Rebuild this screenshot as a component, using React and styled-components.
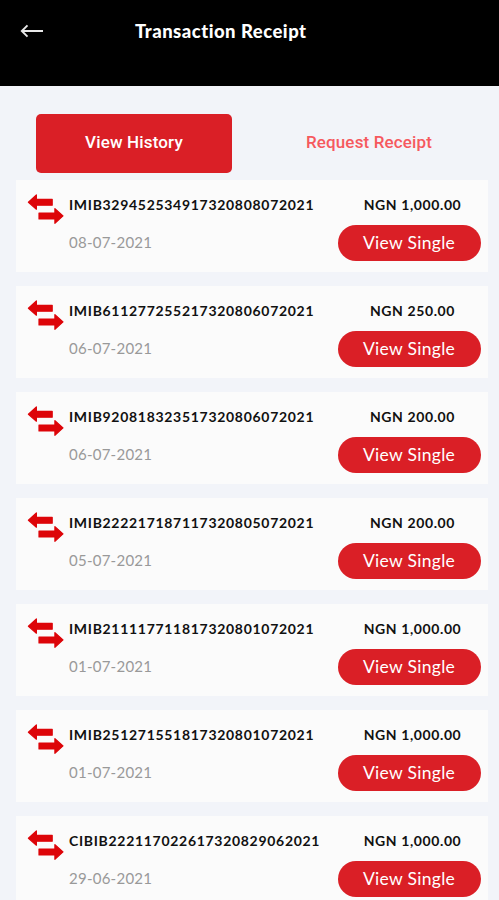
import React, { useState } from "react";
import styled, { createGlobalStyle } from "styled-components";

const transactions = [
  { id: "IMIB329452534917320808072021", date: "08-07-2021", amount: "NGN 1,000.00" },
  { id: "IMIB611277255217320806072021", date: "06-07-2021", amount: "NGN 250.00" },
  { id: "IMIB920818323517320806072021", date: "06-07-2021", amount: "NGN 200.00" },
  { id: "IMIB222217187117320805072021", date: "05-07-2021", amount: "NGN 200.00" },
  { id: "IMIB211117711817320801072021", date: "01-07-2021", amount: "NGN 1,000.00" },
  { id: "IMIB251271551817320801072021", date: "01-07-2021", amount: "NGN 1,000.00" },
  { id: "CIBIB222117022617320829062021", date: "29-06-2021", amount: "NGN 1,000.00" },
];

const BackArrow = () => (
  <svg width="24" height="16" viewBox="0 0 24 16" fill="none" stroke="#e8e8e8" strokeWidth="1.9">
    <path d="M23 8H2M7.5 2.3L1.8 8L7.5 13.7" />
  </svg>
);

const TransferArrows = () => (
  <svg width="37" height="32" viewBox="0 0 37 32" fill="#dd0509" stroke="#dd0509" strokeWidth="1.2" strokeLinejoin="round">
    <path d="M1.4 9.2L9.4 2V6.3H25.2V12.2H9.4V16.2Z" />
    <path d="M36 22.9L27.9 15.6V20H12V25.9H27.9V30.3Z" />
  </svg>
);

const App = () => {
  const [tab, setTab] = useState("history");

  return (
    <StyledScreen>
      <GlobalStyle />
      <StyledHeader>
        <StyledBack aria-label="Back">
          <BackArrow />
        </StyledBack>
        <StyledTitle>Transaction Receipt</StyledTitle>
      </StyledHeader>
      <StyledTabs>
        <StyledTab $active={tab === "history"} onClick={() => setTab("history")}>
          View History
        </StyledTab>
        <StyledTab $active={tab === "request"} onClick={() => setTab("request")}>
          Request Receipt
        </StyledTab>
      </StyledTabs>
      <StyledList>
        {transactions.map((item) => (
          <StyledCard key={item.id}>
            <StyledIcon>
              <TransferArrows />
            </StyledIcon>
            <StyledDetails>
              <StyledId>{item.id}</StyledId>
              <StyledDate>{item.date}</StyledDate>
            </StyledDetails>
            <StyledAction>
              <StyledAmount>{item.amount}</StyledAmount>
              <StyledButton>View Single</StyledButton>
            </StyledAction>
          </StyledCard>
        ))}
      </StyledList>
    </StyledScreen>
  );
};

export default App;

const GlobalStyle = createGlobalStyle`
  body {
    background-color: #f2f4f9;
    margin: 0;
    overflow: hidden;
  }

  button {
    border: none;
    cursor: pointer;
    padding: 0;
  }
`;

const StyledScreen = styled.div`
  background-color: #f2f4f9;
  box-sizing: border-box;
  font-family: Lato, "Open Sans", sans-serif;
  height: 900px;
  overflow: hidden;
  width: 499px;
`;

const StyledHeader = styled.header`
  align-items: flex-start;
  background-color: #000;
  box-sizing: border-box;
  display: flex;
  height: 86px;
  padding: 19px 0 0 20px;
`;

const StyledBack = styled.button`
  background: none;
  display: flex;
  height: 24px;
  padding-top: 4px;
  width: 115px;
`;

const StyledTitle = styled.h1`
  color: #fff;
  font-size: 18.5px;
  font-weight: 900;
  letter-spacing: 0.48px;
  line-height: 24px;
  margin: 0;
  white-space: nowrap;
`;

const StyledTabs = styled.div`
  display: flex;
  gap: 39px;
  padding: 28px 32px 7px 36px;
`;

const StyledTab = styled.button`
  background-color: ${({ $active }) => ($active ? "#da1f26" : "transparent")};
  border-radius: 5px;
  color: ${({ $active }) => ($active ? "#fff" : "#f6595e")};
  font-family: Roboto, sans-serif;
  font-size: 17px;
  font-weight: 500;
  height: 59px;
  letter-spacing: 0.15px;
  padding-bottom: 3px;
  width: 196px;
`;

const StyledList = styled.div`
  display: flex;
  flex-direction: column;
  gap: 14px;
  padding: 0 11px 0 16px;
`;

const StyledCard = styled.div`
  background-color: #fbfbfb;
  box-sizing: border-box;
  display: flex;
  flex-shrink: 0;
  height: 92px;
  padding: 13px 7px 0 11px;
`;

const StyledIcon = styled.div`
  flex-shrink: 0;
  width: 42px;
`;

const StyledDetails = styled.div`
  flex: 1;
  white-space: nowrap;
`;

const StyledId = styled.div`
  color: #111;
  font-size: 14px;
  font-weight: 700;
  letter-spacing: 0.7px;
  line-height: 24px;
`;

const StyledDate = styled.div`
  color: #999;
  font-size: 15px;
  letter-spacing: 0.25px;
  line-height: 20px;
  margin-top: 15px;
`;

const StyledAction = styled.div`
  align-items: center;
  display: flex;
  flex-direction: column;
  width: 144px;
`;

const StyledAmount = styled.div`
  color: #111;
  font-size: 14px;
  font-weight: 700;
  letter-spacing: 0.6px;
  line-height: 24px;
  padding-left: 7px;
`;

const StyledButton = styled.button`
  background-color: #da1f26;
  border-radius: 18px;
  color: #fff;
  font-family: inherit;
  font-size: 17.5px;
  height: 36px;
  letter-spacing: 0.3px;
  margin-top: 8px;
  padding-bottom: 2px;
  width: 143px;
`;
